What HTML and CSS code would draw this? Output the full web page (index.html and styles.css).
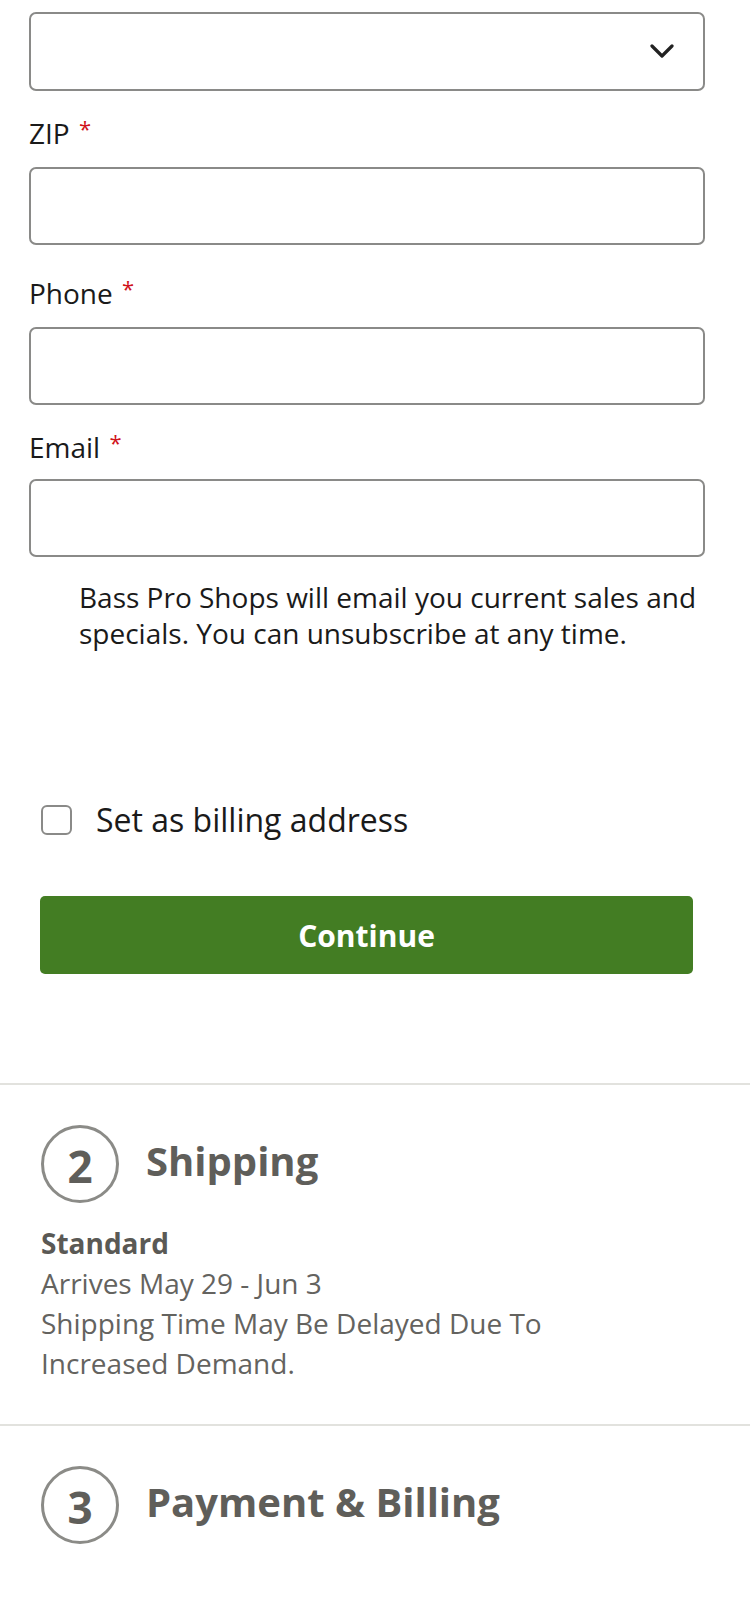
FILE: index.html
```html
<!DOCTYPE html>
<html lang="en">
<head>
<meta charset="utf-8">
<title>Checkout</title>
<link rel="stylesheet" href="styles.css">
</head>
<body>
<div class="form">
  <div class="select-wrap">
    <div class="select"></div>
    <svg class="chev" width="24" height="15" viewBox="0 0 24 15"><path d="M2 2 L12 12 L22 2" fill="none" stroke="#222" stroke-width="3.2" stroke-linecap="round" stroke-linejoin="round"/></svg>
  </div>

  <div class="field f-zip">
    <label class="lbl">ZIP <span class="req">*</span></label>
    <input class="inp" type="text">
  </div>

  <div class="field f-phone">
    <label class="lbl">Phone <span class="req">*</span></label>
    <input class="inp" type="text">
  </div>

  <div class="field f-email">
    <label class="lbl">Email <span class="req">*</span></label>
    <input class="inp" type="text">
  </div>

  <p class="note">Bass Pro Shops will email you current sales and specials. You can unsubscribe at any time.</p>

  <label class="check"><span class="box"></span><span>Set as billing address</span></label>

  <button class="continue">Continue</button>
</div>

<section class="step step-ship">
  <div class="step-head">
    <span class="num">2</span>
    <h2 class="step-title">Shipping</h2>
  </div>
  <div class="ship-info">
    <div class="ship-name">Standard</div>
    <div>Arrives May 29 - Jun 3</div>
    <div>Shipping Time May Be Delayed Due To<br>Increased Demand.</div>
  </div>
</section>

<section class="step step-pay">
  <div class="step-head">
    <span class="num">3</span>
    <h2 class="step-title">Payment &amp; Billing</h2>
  </div>
</section>
</body>
</html>
```

FILE: styles.css
```css
* { box-sizing: border-box; }
html, body { margin: 0; padding: 0; background: #fff; }
body {
  width: 750px;
  font-family: "Open Sans", "Noto Sans", sans-serif;
  color: #1a1a1a;
}

.form {
  padding: 12px 45px 109px 29px;
}

.select-wrap { position: relative; }
.select {
  height: 79px;
  border: 2px solid #8a8a88;
  border-radius: 7px;
  background: #fff;
}
.chev {
  position: absolute;
  right: 31px;
  top: 32px;
}

.field { display: flex; flex-direction: column; }
.f-zip { margin-top: 23px; }
.f-phone { margin-top: 29px; }
.f-email { margin-top: 23px; }

.lbl {
  font-size: 28px;
  line-height: 38px;
  color: #1a1a1a;
  margin-bottom: 15px;
}
.f-email .lbl { margin-bottom: 13px; }
.req {
  color: #d0121b;
  font-size: 22px;
  vertical-align: top;
  line-height: 28px;
  margin-left: 2px;
}
.inp {
  display: block;
  width: 100%;
  height: 78px;
  border: 2px solid #8a8a88;
  border-radius: 7px;
  background: #fff;
  font: inherit;
  padding: 0 16px;
  margin: 0;
}

.note {
  margin: 22px 0 0 0;
  padding-left: 50px;
  font-size: 28px;
  line-height: 36px;
  color: #1a1a1a;
}

.check {
  display: flex;
  align-items: flex-start;
  margin: 149px 0 0 12px;
  font-size: 32px;
  line-height: 40px;
  color: #1a1a1a;
}
.box {
  width: 31px;
  height: 30px;
  margin-top: 5px;
  margin-right: 24px;
  border: 2px solid #8a8a88;
  border-radius: 6px;
  flex: none;
}

.continue {
  display: block;
  width: 653px;
  height: 78px;
  margin: 56px 0 0 11px;
  border: 0;
  border-radius: 5px;
  background: #437d23;
  color: #fff;
  font-family: "Open Sans", "Noto Sans", sans-serif;
  font-weight: 700;
  font-size: 30px;
  padding: 0;
}

.step {
  border-top: 2px solid #e2e2de;
  padding: 40px 0 0 41px;
}
.step-ship { padding-bottom: 41px; }
.step-pay { padding-bottom: 60px; }

.step-head {
  display: flex;
  align-items: center;
}
.num {
  width: 78px;
  height: 78px;
  border: 3px solid #8b8b87;
  border-radius: 50%;
  display: flex;
  align-items: center;
  justify-content: center;
  font-size: 44px;
  font-weight: 700;
  color: #5f5e5a;
  padding-top: 4px;
  flex: none;
}
.step-title {
  margin: 0 0 0 27px;
  font-size: 40px;
  line-height: 50px;
  font-weight: 700;
  color: #5f5e5a;
  position: relative;
  top: -3px;
}

.ship-info {
  margin-top: 20px;
  font-size: 28px;
  line-height: 40px;
  color: #64635f;
}
.ship-name {
  font-weight: 700;
  color: #5a5955;
}
```
